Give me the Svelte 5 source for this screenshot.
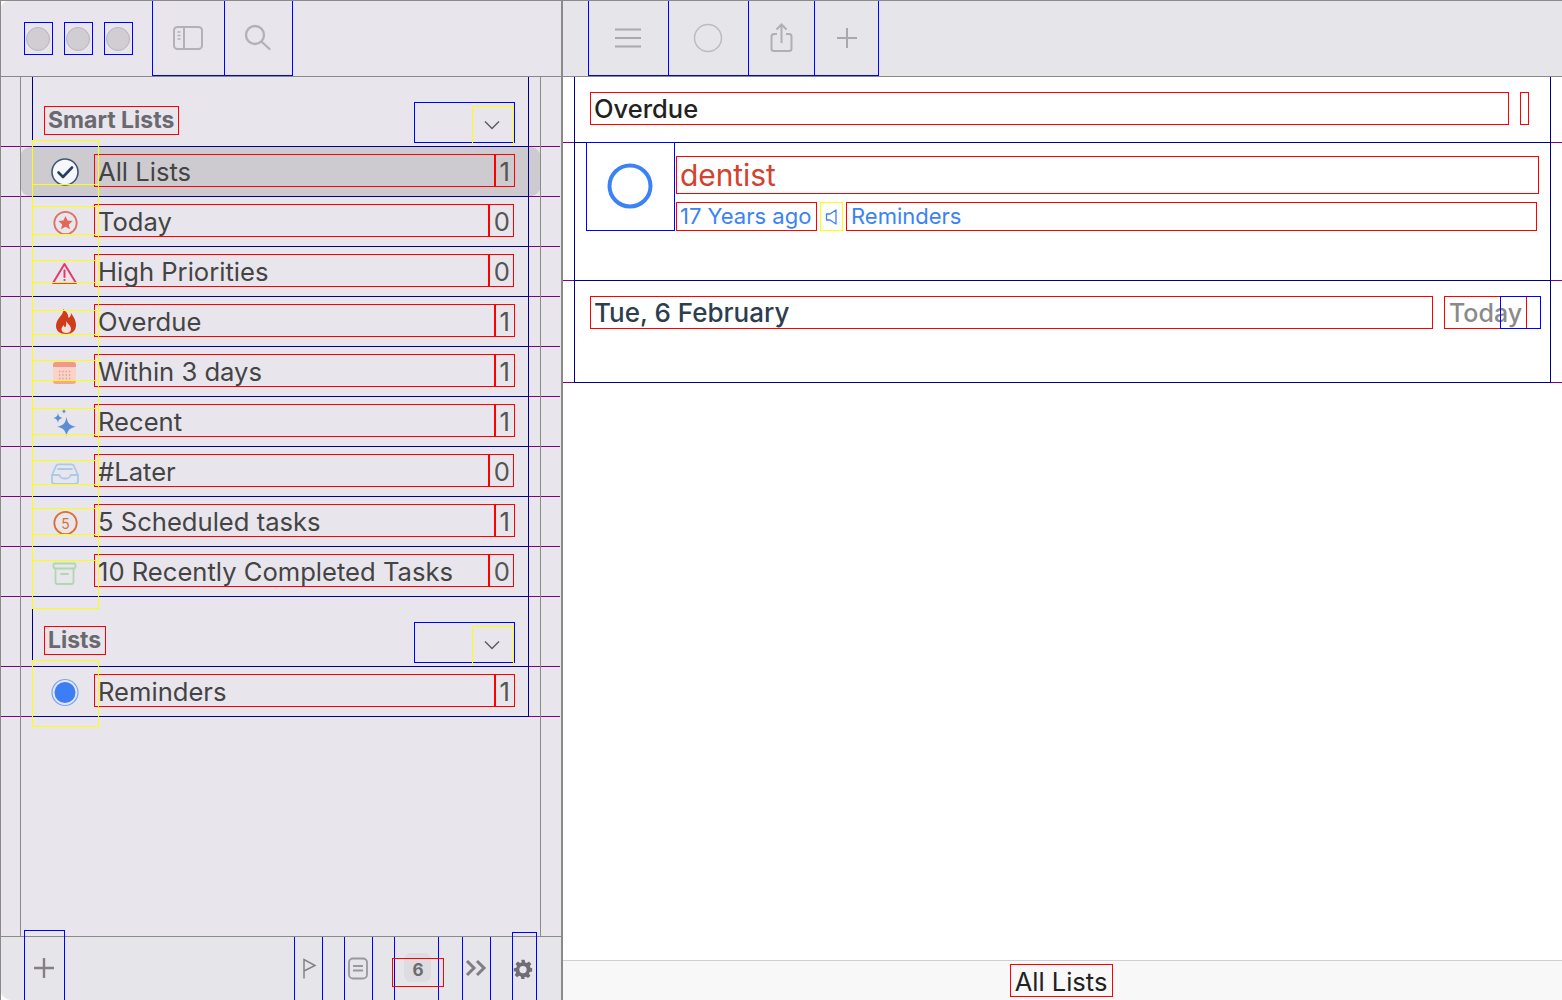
<script>
  const smart = [
    { name: 'All Lists', count: 1, icon: 'check', y: -6, h: 45, sel: true },
    { name: 'Today', count: 0, icon: 'star', y: 10, h: 29 },
    { name: 'High Priorities', count: 0, icon: 'warn', y: 14, h: 23 },
    { name: 'Overdue', count: 1, icon: 'flame', y: 14, h: 25 },
    { name: 'Within 3 days', count: 1, icon: 'cal', y: 14, h: 21 },
    { name: 'Recent', count: 1, icon: 'spark', y: 12, h: 27 },
    { name: '#Later', count: 0, icon: 'inbox', y: 14, h: 25 },
    { name: '5 Scheduled tasks', count: 1, icon: 'five', y: 12, h: 27 },
    { name: '10 Recently Completed Tasks', count: 0, icon: 'archive', y: 14, h: 49 }
  ];
</script>

{#snippet rowIcon(k)}
  <svg class="ric" viewBox="49 0 32 50" width="32" height="50" fill="none" stroke-linecap="round" stroke-linejoin="round">
    {#if k === 'check'}
      <circle cx="65" cy="26" r="13" fill="#f7f7f9" stroke="#3f5878" stroke-width="1.6" />
      <path d="M58.5 26.5l4.5 4.5 9-9.5" stroke="#24405f" stroke-width="2.6" />
    {:else if k === 'star'}
      <circle cx="65.5" cy="27" r="11.2" stroke="#dd7364" stroke-width="1.8" />
      <path d="M65.5 20l2.1 4.6 5 .5-3.8 3.3 1.2 4.9-4.5-2.6-4.5 2.6 1.2-4.9-3.8-3.3 5-.5z" fill="#dd6a5a" />
    {:else if k === 'warn'}
      <path d="M64.500 18L76 37H53z" stroke="#e8386a" stroke-width="2" />
      <path d="M64.500 24.500v6.500" stroke="#e8386a" stroke-width="2" />
      <circle cx="64.500" cy="34" r="1.100" fill="#e8386a" />
    {:else if k === 'flame'}
      <path d="M63 13C64 17 61 19 59 22C57 25 56 27 56 30C56 35 60 38 66 38C72 38 76 35 76 29C76 24 73 20 71 17C71 20 70 21 68.5 22C68.5 18 66 15 63 13Z" fill="#d03c1a" />
      <path d="M66.5 25C67 28 71 29 71 33C71 36 68.5 37 66 37C63.5 37 61.5 35.5 61.5 33C61.5 31 63 30 64 29C64 31 65 31.5 65.5 31C66.5 29 66 27 66.5 25Z" fill="#f3e3dc" />
    {:else if k === 'cal'}
      <rect x="53" y="16" width="23" height="22" rx="3" fill="#f8d3c9" />
      <path d="M53 21v-2a3 3 0 013-3h17a3 3 0 013 3v2z" fill="#f2988a" />
      <path d="M53 35h23v0a3 3 0 01-3 3h-17a3 3 0 01-3-3z" fill="#f2a898" />
      <path d="M59 25.500h12M59 29h12M59 32.500h12" stroke="#ee9484" stroke-width="1.3" stroke-dasharray="1.3 2" stroke-linecap="butt" />
    {:else if k === 'spark'}
      <path d="M66.500 21c1 6 3 8.500 9.500 9.700c-6.500 1.200-8.500 3.500-9.500 9.500c-1-6-3-8.300-9.500-9.500c6.500-1.200 8.500-3.700 9.500-9.700z" fill="#5b8fd4" />
      <path d="M58 17c.5 3 1.500 4.300 4.800 5c-3.300.7-4.300 2-4.800 5c-.5-3-1.500-4.300-4.800-5c3.300-.7 4.300-2 4.800-5z" fill="#5b8fd4" />
      <path d="M64 12.500c.3 1.800.8 2.400 2.600 2.800c-1.800.4-2.300 1-2.600 2.800c-.3-1.800-.8-2.400-2.600-2.800c1.800-.4 2.300-1 2.600-2.800z" fill="#5b8fd4" />
    {:else if k === 'inbox'}
      <path d="M52 29l4-9a3 3 0 012.700-1.700h12.600A3 3 0 0174 20l4 9v6a3 3 0 01-3 3H55a3 3 0 01-3-3z" stroke="#a9cbe8" stroke-width="1.8" />
      <path d="M52 29h7.500a5.500 3.500 0 0011 0H78M58 23h14" stroke="#a9cbe8" stroke-width="1.8" />
    {:else if k === 'five'}
      <circle cx="65.500" cy="27" r="11.200" stroke="#dd6f30" stroke-width="1.8" />
      <text x="65.500" y="32.500" text-anchor="middle" class="five">5</text>
    {:else if k === 'archive'}
      <rect x="53.500" y="17.500" width="22" height="5" rx="1.500" stroke="#aed8ae" stroke-width="1.800" />
      <path d="M55.500 22.500V36a2 2 0 002 2h14a2 2 0 002-2V22.500M61 28h7" stroke="#aed8ae" stroke-width="1.800" />
    {:else if k === 'dot'}
      <circle cx="65" cy="26.500" r="13" stroke="#75a5f8" stroke-width="1.200" />
      <circle cx="65" cy="26.500" r="10.500" fill="#3b7ef6" />
    {/if}
  </svg>
{/snippet}

{#snippet listRow(r)}
  <div class="outer" class:sel={r.sel}>
    <div class="inner">
      <span class="cell">{@render rowIcon(r.icon)}</span>
      <span class="name">{r.name}</span>
      <span class="count" class:zero={r.count === 0}>{r.count}</span>
      <i class="ybox" style="top:{r.y}px;height:{r.h}px"></i>
    </div>
  </div>
{/snippet}

{#snippet sectionHead(label)}
  <div class="outer head">
    <div class="inner">
      <span class="label">{label}</span>
      <span class="toggle">
        <span class="chev">
          <svg width="18" height="10" viewBox="0 0 18 10" fill="none"><path d="M2 1.500l7 7 7-7" stroke="#5e5c62" stroke-width="1.500" /></svg>
        </span>
      </span>
    </div>
  </div>
{/snippet}

<div class="app">
  <aside class="side">
    <header class="bar">
      <div class="lights">
        <span class="light"><b></b></span>
        <span class="light"><b></b></span>
        <span class="light"><b></b></span>
      </div>
      <button class="tb w72">
        <svg width="30" height="26" viewBox="0 0 30 26" fill="none" stroke="#b2b1b5" stroke-width="2"><rect x="1" y="2" width="28" height="22" rx="3.500" /><path d="M11 2v22" /><path d="M4.500 7h3M4.500 10.500h3M4.500 14h3" stroke-width="1.300" /></svg>
      </button>
      <button class="tb w69">
        <svg width="28" height="28" viewBox="0 0 28 28" fill="none" stroke="#b2b1b5" stroke-width="2.300" stroke-linecap="round"><circle cx="11" cy="11" r="9" /><path d="M18 18l7.500 7" /></svg>
      </button>
    </header>

    <div class="lists">
      {@render sectionHead('Smart Lists')}
      {#each smart as r}
        {@render listRow(r)}
      {/each}
      {@render sectionHead('Lists')}
      {@render listRow({ name: 'Reminders', count: 1, icon: 'dot', y: -6, h: 67 })}
      <i class="ycol"></i>
    </div>

    <footer class="sfoot">
      <span class="fb add">
        <svg width="24" height="24" viewBox="0 0 24 24" stroke="#838186" stroke-width="2.400"><path d="M12 2v20M2 12h20" /></svg>
      </span>
      <span class="spacer"></span>
      <span class="fb w28 flag">
        <svg width="15" height="21" viewBox="0 0 15 21" fill="none" stroke="#848287" stroke-width="1.500"><path d="M2 20.500V1.500l11 6-11 5.500" /></svg>
      </span>
      <span class="fb w28 note">
        <svg width="22" height="24" viewBox="0 0 22 24" fill="none" stroke="#9a989d" stroke-width="1.800"><rect x="2" y="2.500" width="18" height="20" rx="4" /><path d="M6 10h10M6 14.500h10" /></svg>
      </span>
      <span class="fb w44 six">
        <em class="pill"></em>
        <span class="sixnum">6</span>
      </span>
      <span class="fb w28 more">
        <svg width="22" height="18" viewBox="0 0 22 18" fill="none" stroke="#807e83" stroke-width="3"><path d="M2 2l7 7-7 7M12 2l7 7-7 7" /></svg>
      </span>
      <span class="fb gear">
        <svg width="20" height="20" viewBox="0 0 24 24"><path fill="#706e73" fill-rule="evenodd" d="M10 1h4l.6 3.100 2 .8 2.600-1.800 2.800 2.800-1.800 2.600.8 2L23 11v4l-2.900.6-.9 2 1.700 2.500-2.800 2.800-2.600-1.700-2 .8L14 24h-4l-.6-3-2-.8-2.500 1.700-2.900-2.800 1.800-2.500-.9-2L1 15v-4l2.900-.5.9-2L3 5.900l2.900-2.800 2.500 1.800 2-.8zM12 8.300a4.400 4.400 0 100 8.800 4.400 4.400 0 000-8.800z" /></svg>
      </span>
    </footer>
  </aside>

  <main class="main">
    <header class="bar mbar">
      <button class="tb w80">
        <svg width="28" height="20" viewBox="0 0 28 20" stroke="#a9a8ad" stroke-width="1.800"><path d="M1 1.500h26M1 10h26M1 18.500h26" /></svg>
      </button>
      <button class="tb w80">
        <svg width="30" height="30" viewBox="0 0 30 30" fill="none" stroke="#bcbbc0" stroke-width="1.500"><circle cx="15" cy="15" r="13.500" /></svg>
      </button>
      <button class="tb w66">
        <svg width="26" height="30" viewBox="0 0 26 30" fill="none" stroke="#b0afb4" stroke-width="2"><path d="M8 11H5a2.500 2.500 0 00-2.500 2.500v12A2.500 2.500 0 005 28h15a2.500 2.500 0 002.500-2.500v-12A2.500 2.500 0 0020 11h-3M12.500 20V2M7.500 6.500l5-5 5 5" /></svg>
      </button>
      <button class="tb w64">
        <svg width="24" height="24" viewBox="0 0 24 24" stroke="#a9a8ad" stroke-width="2"><path d="M12 2v20M2 12h20" /></svg>
      </button>
    </header>

    <div class="content">
      <section class="sec s1">
        <div class="secin">
          <h2 class="ovd">Overdue</h2>
          <span class="ovcount"></span>
        </div>
      </section>
      <section class="sec s2">
        <div class="secin task">
          <span class="tick">
            <svg width="46" height="46" viewBox="0 0 46 46" fill="none"><circle cx="23" cy="23" r="20.500" stroke="#3b82f6" stroke-width="4" /></svg>
          </span>
          <div class="tbody">
            <div class="title">dentist</div>
            <div class="meta">
              <span class="ago">17 Years ago</span>
              <span class="spk">
                <svg width="14" height="18" viewBox="0 0 14 18" fill="none" stroke="#3b82f6" stroke-width="1.300" stroke-linejoin="round"><path d="M1.500 6v6h3.500l6 4V2L5 6z" /></svg>
              </span>
              <span class="rem">Reminders</span>
            </div>
          </div>
        </div>
      </section>
      <section class="sec s3">
        <div class="secin dateline">
          <span class="date">Tue, 6 February</span>
          <span class="todaybox">Today<i class="tblue"></i></span>
        </div>
      </section>
    </div>

    <footer class="mfoot"><span class="alllists">All Lists</span></footer>
  </main>
  <i class="frame"></i>
</div>

<style>
  :global(body) { margin: 0; overflow: hidden; background: #fff; }
  .app {
    position: relative; display: flex; width: 1562px; height: 1000px; overflow: hidden;
    font-family: Inter, "Noto Sans", "Liberation Sans", sans-serif; color: #444;
    background: #fbfbfc;
  }
  .frame { position: absolute; left: 0; top: 0; right: 0; height: 1000px; border-left: 1px solid #8a8a8a; border-top: 1px solid #8a8a8a; box-sizing: border-box; pointer-events: none; z-index: 5; }
  .side { width: 561px; height: 1000px; flex: none; display: flex; flex-direction: column; background: #e8e6ec; border-radius: 12px 0 0 12px; }
  .main { flex: 1; display: flex; flex-direction: column; min-width: 0; border-left: 2px solid #8a8a8a; height: 1000px; box-sizing: border-box; background: #fff; }

  .bar { height: 77px; flex: none; box-sizing: border-box; border-bottom: 1px solid #8a8a8a; display: flex; position: relative; z-index: 3; background: #e8e6ec; border-radius: 12px 0 0 0; }
  .mbar { background: #e6e5ea; border-radius: 0; padding-left: 25px; }
  .lights { display: flex; gap: 11px; margin: 22px 19px 0 24px; height: 33px; width: 109px; }
  .light { width: 29px; height: 33px; flex: none; box-sizing: border-box; border: 1px solid #0000ff; display: flex; align-items: center; justify-content: center; padding-right: 1px; }
  .light b { width: 24px; height: 24px; border-radius: 50%; background: #d0ced3; border: 1px solid #b7b5ba; box-sizing: border-box; }
  .tb { height: 76px; padding: 0 2px 0 0; margin: 0; border: 1px solid #0000ff; box-sizing: border-box; background: none; display: flex; align-items: center; justify-content: center; flex: none; }
  .w72 { width: 73px; margin-right: -1px; }
  .w69 { width: 69px; }
  .w80 { width: 81px; margin-right: -1px; }
  .w66 { width: 67px; margin-right: -1px; padding: 0; }
  .w64 { width: 65px; padding: 0; }

  .lists { position: relative; height: 860px; margin-top: -1px; box-sizing: border-box; flex: none; }
  .lists::before, .lists::after { content: ''; position: absolute; top: 0; bottom: 0; width: 1px; background: #8a8a8a; z-index: 2; }
  .lists::before { left: 20px; }
  .lists::after { left: 540px; }

  .outer { position: relative; width: 560px; height: 51px; margin-bottom: -1px; box-sizing: border-box; border: 1px solid #800080; border-right: 0; }
  .outer.head { height: 71px; }
  .outer.sel::before { content: ''; position: absolute; left: 19px; width: 521px; top: 0; height: 49px; background: #cdcbd0; border-radius: 11px; }
  .inner { position: absolute; left: 31px; top: -1px; width: 497px; height: 51px; box-sizing: border-box; border: 1px solid #00008b; display: flex; align-items: center; padding: 0 13px 2px 0; }
  .head .inner { height: 71px; align-items: flex-start; padding-bottom: 0; }
  .cell { width: 61px; height: 49px; flex: none; position: relative; }
  .ric { position: absolute; left: 16px; top: 0; }
  .five { font-size: 14px; fill: #dd6f30; font-family: Inter, sans-serif; }
  .name { flex: 1; min-width: 0; height: 33px; line-height: 31px; padding-top: 1px; font-size: 25.6px; padding-left: 3px; box-sizing: border-box; border: 1px solid #ff0000; white-space: nowrap; position: relative; }
  .count { width: 20px; height: 33px; line-height: 31px; padding-top: 1px; font-size: 25.6px; text-align: right; padding-right: 4px; box-sizing: border-box; border: 1px solid #ff0000; flex: none; color: #555; position: relative; }
  .count.zero { width: 25px; margin-right: 1px; padding-right: 3px; }
  .ybox { position: absolute; left: -1px; width: 66px; box-sizing: border-box; border-top: 1px solid #ffff00; border-bottom: 1px solid #ffff00; pointer-events: none; z-index: 1; margin-top: -1px; }
  .ycol { position: absolute; left: 32px; top: 64px; width: 67px; height: 469px; box-sizing: border-box; border-left: 1px solid #ffff00; border-right: 1px solid #ffff00; pointer-events: none; z-index: 1; }
  .outer:last-of-type .ybox { border: 1px solid #ffff00; width: 67px; }
  .label { margin: 29px 0 0 11px; height: 29px; line-height: 27px; padding: 0 4px 0 3px; font-size: 23px; font-weight: 700; color: #6b696f; border: 1px solid #ff0000; box-sizing: border-box; }
  .toggle { position: absolute; left: 381px; top: 25px; width: 101px; height: 41px; border: 1px solid #0000ff; box-sizing: border-box; }
  .chev { position: absolute; left: 57px; top: 3px; width: 42px; height: 42px; box-sizing: border-box; border: 1px solid #ffff00; border-bottom: 0; display: flex; align-items: center; justify-content: center; padding: 0 3px 5px 0; }

  .sfoot { height: 64px; flex: none; box-sizing: border-box; border-top: 1px solid #8a8a8a; background: #e6e5ea; display: flex; padding-left: 24px; position: relative; z-index: 3; border-radius: 0 0 0 14px; }
  .spacer { width: 229px; flex: none; }
  .fb { box-sizing: border-box; border-left: 1px solid #0000ff; border-right: 1px solid #0000ff; height: 63px; flex: none; display: flex; align-items: center; justify-content: center; padding-bottom: 1px; position: relative; }
  .add { width: 41px; height: 70px; margin-top: -7px; border-top: 1px solid #0000ff; padding: 5px 1px 0 0; }
  .w28 { width: 29px; margin-right: 21px; }
  .flag { padding: 0 0 1px 2px; }
  .note { margin-right: 21px; padding-right: 1px; }
  .w44 { width: 45px; margin-right: 23px; }
  .more { margin-right: 21px; padding-right: 1px; }
  .gear { width: 25px; height: 68px; margin-top: -5px; border-top: 1px solid #0000ff; padding: 5px 3px 0 0; }
  .pill { position: absolute; left: 9px; top: 16px; width: 27px; height: 29px; border-radius: 7px; background: #dddce0; }
  .sixnum { position: absolute; left: -3px; top: 21px; width: 52px; height: 29px; line-height: 22px; text-align: center; font-size: 17px; font-weight: 700; color: #6d6b70; border: 1px solid #ff0000; box-sizing: border-box; }

  .content { flex: 1; min-height: 0; margin-top: -1px; background: #fff; }
  .sec { box-sizing: border-box; border-bottom: 1px solid #800080; }
  .s1 { height: 67px; }
  .s2 { height: 138px; }
  .s3 { height: 102px; }
  .secin { margin-left: 11px; width: 977px; height: 100%; box-sizing: border-box; border-left: 1px solid #00008b; border-right: 1px solid #00008b; border-bottom: 1px solid #00008b; display: flex; }
  .s1 .secin { height: 67px; align-items: flex-start; padding: 16px 0 0 15px; }
  .s2 .secin { height: 138px; }
  .s3 .secin { height: 102px; padding: 15px 0 0 15px; }
  .ovd { margin: 0; width: 919px; height: 33px; line-height: 31px; font-size: 25.500px; font-weight: 500; color: #222; padding-left: 3px; box-sizing: border-box; border: 1px solid #ff0000; }
  .ovcount { width: 9px; height: 33px; margin-left: 11px; border: 1px solid #ff0000; box-sizing: border-box; }
  .tick { width: 89px; height: 89px; margin: -1px 0 0 11px; flex: none; box-sizing: border-box; border: 1px solid #0000ff; display: flex; align-items: center; justify-content: center; padding: 0 1px 1px 0; }
  .tbody { margin: -1px 0 0 1px; padding-top: 14px; width: 863px; flex: none; }
  .title { height: 38px; line-height: 36px; font-size: 30px; letter-spacing: -0.1px; color: #d4412f; padding-left: 3px; box-sizing: border-box; border: 1px solid #ff0000; }
  .meta { margin-top: 8px; display: flex; width: 861px; height: 29px; }
  .ago { width: 141px; height: 29px; line-height: 27px; font-size: 22px; color: #3b82f6; padding-left: 3px; box-sizing: border-box; border: 1px solid #ff0000; white-space: nowrap; }
  .spk { width: 23px; margin-left: 3px; height: 29px; box-sizing: border-box; border: 1px solid #ffff00; display: flex; align-items: center; justify-content: center; }
  .rem { flex: 1; margin-left: 3px; height: 29px; line-height: 27px; font-size: 22px; color: #3b82f6; padding-left: 4px; box-sizing: border-box; border: 1px solid #ff0000; }
  .date { width: 843px; height: 33px; line-height: 31px; font-size: 26px; font-weight: 500; color: #2c3e50; padding-left: 3px; box-sizing: border-box; border: 1px solid #ff0000; }
  .todaybox { position: relative; width: 83px; height: 33px; margin-left: 11px; line-height: 31px; padding-top: 1px; font-size: 25px; font-weight: 500; color: #8a8a8a; padding-left: 4px; box-sizing: border-box; border: 1px solid #ff0000; }
  .tblue { position: absolute; left: 55px; top: -1px; width: 41px; height: 33px; box-sizing: border-box; border: 1px solid #0000ff; }

  .mfoot { margin-top: auto; height: 40px; flex: none; box-sizing: border-box; border-top: 1px solid #cfcfcf; background: #f8f8f8; display: flex; justify-content: center; padding: 3px 3px 0 0; }
  .alllists { height: 33px; line-height: 31px; padding-top: 1px; font-size: 25.500px; color: #222; width: 103px; text-align: center; border: 1px solid #ff0000; box-sizing: border-box; white-space: nowrap; }
</style>
